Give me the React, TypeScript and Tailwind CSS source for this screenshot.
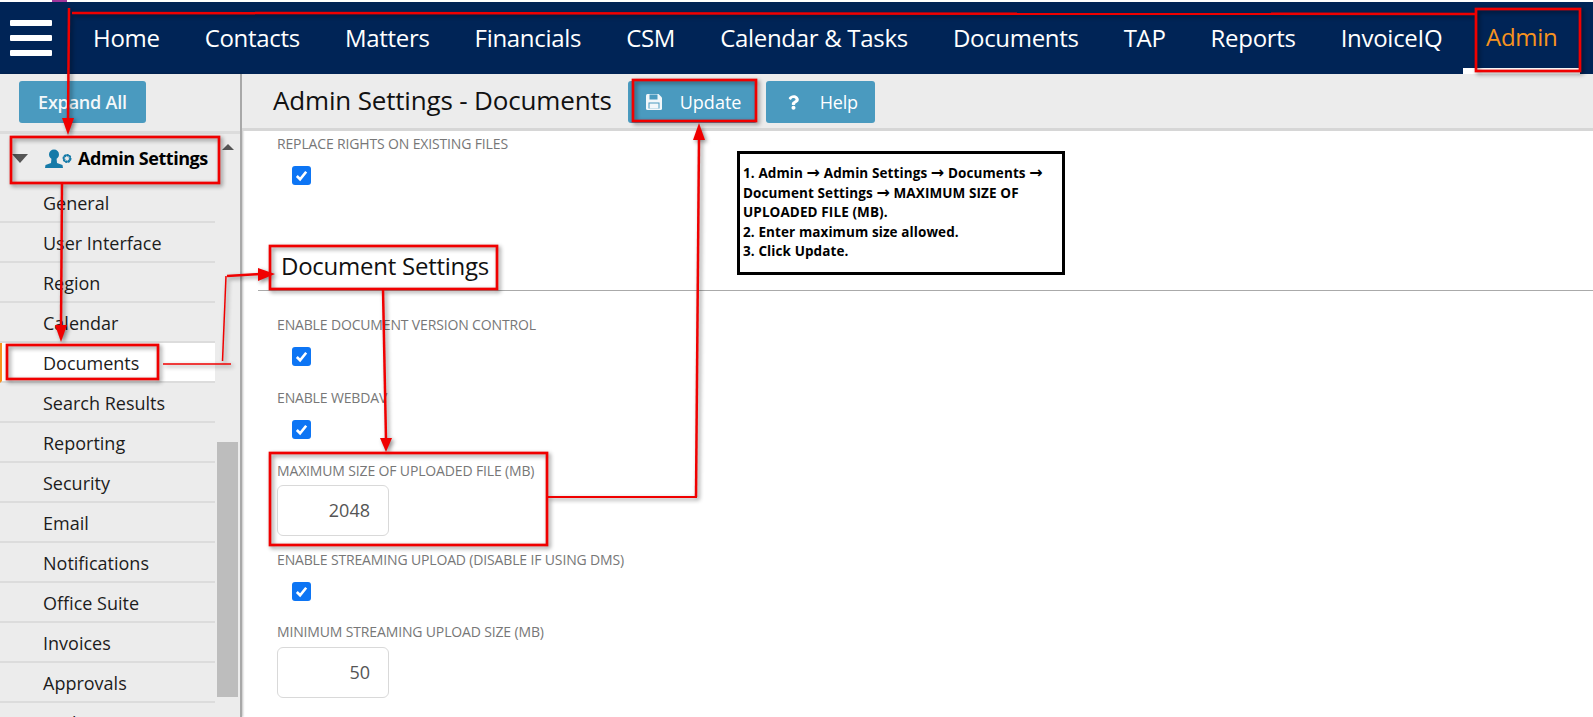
import { FaQuestion } from 'react-icons/fa';

const navItems = ['Home', 'Contacts', 'Matters', 'Financials', 'CSM', 'Calendar & Tasks', 'Documents', 'TAP', 'Reports', 'InvoiceIQ'];
const sideItems = ['General', 'User Interface', 'Region', 'Calendar', 'Documents', 'Search Results', 'Reporting', 'Security', 'Email', 'Notifications', 'Office Suite', 'Invoices', 'Approvals', 'Audit'];

function Checkbox() {
  return (
    <div className="ml-[15px] flex h-[19px] w-[19px] items-center justify-center rounded-[3px] bg-[#0d75f4]">
      <svg viewBox="0 0 16 16" className="h-[15px] w-[15px]" fill="none" stroke="white" strokeWidth="2.8">
        <path d="M3 8.5 L6.5 12 L13 4" />
      </svg>
    </div>
  );
}

function Label({ children, className }: { children: string; className: string }) {
  return <div className={`h-[20px] text-[14px] leading-[20px] tracking-[-0.15px] text-[#777] ${className}`}>{children}</div>;
}

function NumberBox({ value, className }: { value: string; className: string }) {
  return (
    <div className={`flex h-[51px] w-[112px] items-center justify-end rounded-[6px] border border-[#d9d9d9] pr-[18px] text-[18px] text-[#555] ${className}`}>
      {value}
    </div>
  );
}

function Arrow() {
  return <span className="font-['DejaVu_Sans',sans-serif] text-[16px] leading-none">→</span>;
}

function SaveIcon() {
  return (
    <svg viewBox="0 0 18 18" className="h-[18px] w-[18px]" fill="none">
      <path d="M1 2.5 Q1 1 2.5 1 L13.5 1 L17 4.5 L17 15.5 Q17 17 15.5 17 L2.5 17 Q1 17 1 15.5 Z" fill="#f2f7fa" />
      <rect x="4.5" y="1.5" width="8" height="5" fill="#4a9abf" />
      <rect x="3.5" y="9.5" width="11" height="6" fill="#4a9abf" />
      <rect x="4.5" y="10.5" width="9" height="5" fill="#f2f7fa" />
    </svg>
  );
}

function Annotations() {
  const box = 'fill-none stroke-[#f00000] stroke-[2.7]';
  const line = 'fill-none stroke-[#f00000] stroke-[2.5]';
  return (
    <svg className="absolute left-0 top-0 drop-shadow-[2px_2px_2px_rgba(0,0,0,0.45)]" width="1593" height="717">
      <rect x="11" y="137" width="208" height="46" className={box} />
      <rect x="7" y="345" width="151" height="34" className={box} />
      <rect x="270" y="246" width="227" height="43" className={box} />
      <rect x="270" y="453" width="277" height="92" className={box} />
      <rect x="633" y="80" width="123" height="41" className={box} />
      <rect x="1476" y="9" width="104" height="62" className={box} />

      <path d="M72 13 L1476 14" className={line} />
      <path d="M69 8 L68 120" className={line} />
      <path d="M62 118 L74 118 L68 135 Z" fill="#f00000" />
      <path d="M62 183 L61 328" className={line} />
      <path d="M55 325 L67 325 L61 342 Z" fill="#f00000" />

      <path d="M163 364 L231 364" fill="none" stroke="#f00000" strokeWidth="1.5" />
      <path d="M222.5 361 L226 276" fill="none" stroke="#f00000" strokeWidth="1.5" />
      <path d="M227 276 L260 274" className={line} />
      <path d="M258 268 L258 281 L275 274 Z" fill="#f00000" />

      <path d="M383 289 L386 440" className={line} />
      <path d="M380 438 L392 438 L386 452 Z" fill="#f00000" />

      <path d="M547 497 L697 497" fill="none" stroke="#f00000" strokeWidth="2" />
      <path d="M696 497 L699 138" className={line} />
      <path d="M693 140 L705 140 L699 123 Z" fill="#f00000" />
    </svg>
  );
}

export default function App() {
  return (
    <div className="relative h-[717px] w-[1593px] overflow-hidden bg-white font-['Open_Sans',sans-serif] text-black">
      <div className="h-[2px] bg-white pl-[52px]">
        <div className="h-[2px] w-[15px] bg-[#a0359a]" />
      </div>

      <nav className="flex h-[72px] items-center bg-[#002456]">
        <div className="ml-[10px] flex w-[83px] shrink-0 flex-col gap-[9px]">
          <div className="h-[6px] w-[42px] rounded-[1px] bg-white" />
          <div className="h-[6px] w-[42px] rounded-[1px] bg-white" />
          <div className="h-[6px] w-[42px] rounded-[1px] bg-white" />
        </div>
        <div className="flex items-center gap-[45px] whitespace-nowrap text-[24px] tracking-[-0.3px] text-white">
          {navItems.map((item) => (
            <span key={item}>{item}</span>
          ))}
        </div>
        <div className="ml-auto mr-[13px] flex h-full w-[117px] shrink-0 flex-col justify-between">
          <span className="mt-[17px] pl-[23px] text-[24px] leading-[36px] tracking-[-0.3px] text-[#f7931e]">Admin</span>
          <div className="h-[6px] bg-white" />
        </div>
      </nav>

      <div className="flex h-[643px]">
        <aside className="flex h-full w-[242px] flex-col border-r-2 border-[#a8a8a8] bg-[#ececec] shadow-[1px_0_2px_rgba(0,0,0,0.25)]">
          <div className="h-[60px] shrink-0 border-b-[3px] border-[#dcdcdc] pl-[19px] pt-[7px]">
            <button className="h-[42px] w-[127px] rounded-[3px] bg-[#4a9abf] text-[18px] font-semibold tracking-[-0.2px] text-[#f4f8fa]">Expand All</button>
          </div>
          <div className="flex min-h-0 flex-1">
            <div className="w-[215px] shrink-0">
              <div className="flex h-[49px] items-center pl-[12px]">
                <div className="h-0 w-0 border-x-[8px] border-t-[9px] border-x-transparent border-t-[#555]" />
                <svg viewBox="0 0 28 20" className="ml-[17px] h-[20px] w-[28px]" fill="#157aa8">
                  <circle cx="9" cy="5.5" r="5" />
                  <path d="M6.5 9 L11.5 9 L12 14 L17.5 16 L18 19 L0 19 L0.5 16 L6 14 Z" />
                  <circle cx="22" cy="9.5" r="3.2" fill="none" stroke="#157aa8" strokeWidth="2.6" strokeDasharray="1.6 0.8" />
                  <circle cx="22" cy="9.5" r="3.4" fill="none" stroke="#157aa8" strokeWidth="1.2" />
                </svg>
                <span className="ml-[5px] text-[18px] font-bold tracking-[-0.45px]">Admin Settings</span>
              </div>
              {sideItems.map((item) => (
                <div
                  key={item}
                  className={
                    item === 'Documents'
                      ? 'flex h-[40px] items-center border-b-2 border-l-2 border-b-[#dcdcdc] border-l-[#f7931e] bg-white pl-[41px] pt-[2px] text-[18px] text-[#1c1c1c]'
                      : 'flex h-[40px] items-center border-b-2 border-[#dcdcdc] pl-[43px] pt-[2px] text-[18px] text-[#1c1c1c]'
                  }
                >
                  {item}
                </div>
              ))}
            </div>
            <div className="flex w-[23px] flex-col">
              <div className="ml-[7px] mt-[10px] h-0 w-0 border-x-[6px] border-b-[6px] border-x-transparent border-b-[#555]" />
              <div className="ml-[2px] mt-[292px] h-[255px] w-[21px] bg-[#bdbdbd]" />
            </div>
          </div>
        </aside>

        <main className="min-w-0 flex-1">
          <div className="flex h-[57px] items-start border-b-[3px] border-[#d6d6d6] bg-[#ececec]">
            <h1 className="ml-[31px] mt-[6px] text-[26px] leading-[40px] tracking-[-0.17px] text-[#111]">Admin Settings - Documents</h1>
            <button className="ml-[16px] mt-[7px] flex h-[42px] w-[129px] items-center rounded-[3px] bg-[#4a9abf] pl-[17px] text-[18px] text-white">
              <SaveIcon />
              <span className="ml-[17px]">Update</span>
            </button>
            <button className="ml-[9px] mt-[7px] flex h-[42px] w-[109px] items-center rounded-[3px] bg-[#4a9abf] pl-[22px] text-[18px] tracking-[-0.2px] text-white">
              <FaQuestion className="h-[15px] w-[11px]" />
              <span className="ml-[21px]">Help</span>
            </button>
          </div>

          <div className="pt-[3px]">
            <div className="pl-[35px]">
              <Label className="">REPLACE RIGHTS ON EXISTING FILES</Label>
              <div className="mt-[12px]"><Checkbox /></div>
            </div>
            <div className="ml-[16px] mt-[61px] h-[45px] border-b border-[#aaa] pl-[23px] text-[24px] leading-[40px] tracking-[-0.25px] text-[#111]">Document Settings</div>
            <div className="pl-[35px]">
              <Label className="mt-[24px]">ENABLE DOCUMENT VERSION CONTROL</Label>
              <div className="mt-[12px]"><Checkbox /></div>
              <Label className="mt-[22px]">ENABLE WEBDAV</Label>
              <div className="mt-[12px]"><Checkbox /></div>
              <Label className="mt-[22px]">MAXIMUM SIZE OF UPLOADED FILE (MB)</Label>
              <NumberBox className="mt-[4px]" value="2048" />
              <Label className="mt-[14px]">ENABLE STREAMING UPLOAD (DISABLE IF USING DMS)</Label>
              <div className="mt-[12px]"><Checkbox /></div>
              <Label className="mt-[21px]">MINIMUM STREAMING UPLOAD SIZE (MB)</Label>
              <NumberBox className="mt-[5px]" value="50" />
            </div>
          </div>
        </main>
      </div>

      <div className="absolute left-[737px] top-[151px] h-[124px] w-[328px] border-[3px] border-black bg-white pl-[3px] pt-[10px] text-[13.5px] font-bold leading-[19.6px] tracking-[0.1px] text-black">
        <div>1. Admin <Arrow /> Admin Settings <Arrow /> Documents <Arrow /></div>
        <div>Document Settings <Arrow /> MAXIMUM SIZE OF</div>
        <div>UPLOADED FILE (MB).</div>
        <div>2. Enter maximum size allowed.</div>
        <div>3. Click Update.</div>
      </div>

      <Annotations />
    </div>
  );
}
